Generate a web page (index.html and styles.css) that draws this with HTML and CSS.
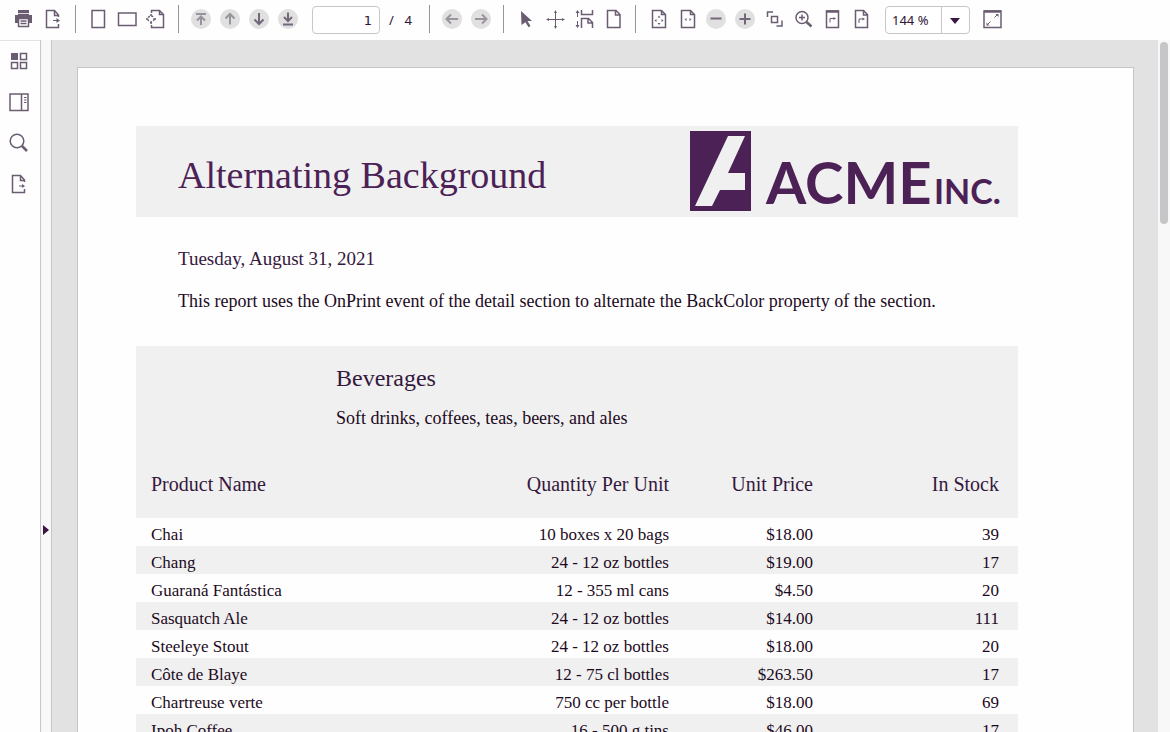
FILE: index.html
```html
<!DOCTYPE html>
<html lang="en">
<head>
<meta charset="utf-8">
<title>Alternating Background</title>
<link rel="stylesheet" href="styles.css">
</head>
<body>
<header class="toolbar" role="toolbar" aria-label="Report viewer">
  <button class="tool" aria-label="Print"><svg viewBox="0 0 20 20"><path class="solid" d="M4 1h11v3H4zM1 6h17v8h-3V9H4v5H1z"/><path d="M4 5.500h11M4.500 9.500h10v8h-10zM6.500 12h6M6.500 14.500h6"/></svg></button>
  <button class="tool" aria-label="Export"><svg viewBox="0 0 20 20"><path d="M15.500 8V6l-4-4.500h-8v17h12V15M11.500 2v4.500h4"/><path class="thin" d="M10 11.500h4"/><path class="solid" d="M13.500 9l3.500 2.500-3.500 2.500z"/></svg></button>
  <span class="sep"></span>
  <button class="tool" aria-label="Portrait"><svg viewBox="0 0 20 20"><path d="M4 1.500h12.500v17H4z"/></svg></button>
  <button class="tool" aria-label="Landscape"><svg viewBox="0 0 20 20"><path d="M1.500 4H19v12.500H1.500z"/></svg></button>
  <button class="tool" aria-label="Page setup"><svg viewBox="0 0 20 20"><path d="M5.500 4V1.500h8l4 4v13h-12V16M13.500 2v3.500h4"/><circle cx="5" cy="10" r="3" stroke-dasharray="2 1.500"/><path d="M5 5v2M5 13v2M0 10h2M8 10h2"/></svg></button>
  <span class="sep"></span>
  <button class="tool round off" aria-label="First page"><svg viewBox="0 0 20 20"><path d="M5 5h10M10 16V8M6 11.500l4-4 4 4"/></svg></button>
  <button class="tool round off" aria-label="Previous page"><svg viewBox="0 0 20 20"><path d="M10 15.500V5.500M5.500 9.500L10 5l4.500 4.500"/></svg></button>
  <button class="tool round" aria-label="Next page"><svg viewBox="0 0 20 20"><path d="M10 4v10.500M5.500 10.500L10 15l4.500-4.500"/></svg></button>
  <button class="tool round" aria-label="Last page"><svg viewBox="0 0 20 20"><path d="M10 3.500v8M6 8l4 4 4-4M5 15.500h10"/></svg></button>
  <input class="page-input" type="text" value="1" aria-label="Page number">
  <span class="page-total"><span>/</span><span>4</span></span>
  <span class="sep"></span>
  <button class="tool round off" aria-label="Back"><svg viewBox="0 0 20 20"><path d="M16 10H5M9 5.500L4.500 10 9 14.500"/></svg></button>
  <button class="tool round off" aria-label="Forward"><svg viewBox="0 0 20 20"><path d="M4 10h11M11 5.500l4.500 4.500-4.500 4.500"/></svg></button>
  <span class="sep"></span>
  <button class="tool" aria-label="Select"><svg viewBox="0 0 20 20"><path class="solid" d="M5 2l11 10h-4.500l3 5-2 1.200-3-5L5.500 16z"/></svg></button>
  <button class="tool" aria-label="Pan"><svg viewBox="0 0 20 20"><path class="thin" d="M10.500 2v17M2 10.500h17"/><path class="solid" d="M10.500 1l1.500 3h-3zM10.500 20l1.500-3h-3zM1 10.500l3-1.500v3zM20 10.500l-3-1.500v3z"/></svg></button>
  <button class="tool" aria-label="Continuous pages"><svg viewBox="0 0 20 20"><path d="M7.500 1v4.500h11V1M7.500 19V9.500h7l4 4V19M14 10v4h4.500"/><path class="thin" d="M3.500 3v5M3.500 12v5"/><path class="solid" d="M3.500 1l2 3h-4zM3.500 19l2-3h-4z"/></svg></button>
  <button class="tool" aria-label="Single page"><svg viewBox="0 0 20 20"><path d="M4.500 1.500h8.500l4 4v13H4.500zM12.500 2v4H17"/></svg></button>
  <span class="sep"></span>
  <button class="tool" aria-label="Fit page"><svg viewBox="0 0 20 20"><path d="M4.500 1.500h9l4 4v13h-13zM13.500 2v3.500h4"/><path class="solid" d="M9.500 8.500h3L11 6.500zM9.500 14h3L11 16zM8.500 10v3l-2-1.500zM13.500 10v3l2-1.500z"/></svg></button>
  <button class="tool" aria-label="Fit width"><svg viewBox="0 0 20 20"><path d="M4.500 1.500h9l4 4v13h-13zM13.500 2v3.500h4"/><path class="solid" d="M9.500 9v3l-2-1.500zM12.500 9v3l2-1.500z"/></svg></button>
  <button class="tool round" aria-label="Zoom out"><svg viewBox="0 0 20 20"><path d="M4.500 9.500h11"/></svg></button>
  <button class="tool round" aria-label="Zoom in"><svg viewBox="0 0 20 20"><path d="M4.500 10h11M10 4.500v11"/></svg></button>
  <button class="tool" aria-label="Zoom area"><svg viewBox="0 0 20 20"><path d="M3.500 8V3H9M7.500 7.500h6v6h-6zM18 11.500V17h-5.500"/></svg></button>
  <button class="tool" aria-label="Magnifier"><svg viewBox="0 0 20 20"><circle cx="9" cy="8.500" r="6"/><path d="M6 8.500h6M9 5.500v6"/><path class="bold" d="M13.500 13l5 4.500"/></svg></button>
  <button class="tool" aria-label="Rotate page"><svg viewBox="0 0 20 20"><path d="M4.500 2h12v16.500h-12z"/><path class="bold" d="M4 2.500h13"/><path class="thin" d="M8 13.500V9.500h4"/><path class="solid" d="M11.500 8v3l2.500-1.500z"/></svg></button>
  <button class="tool" aria-label="Rotate view"><svg viewBox="0 0 20 20"><path d="M4.500 1.500h8l4 4v13h-12zM12.500 2v4h4"/><path class="thin" d="M8 14v-4h4"/><path class="solid" d="M11.500 8.500v3l2.500-1.500z"/></svg></button>
  <span class="zoom">
    <select aria-label="Zoom level"><option>144 %</option></select>
    <svg class="caret" viewBox="0 0 10 6"><path d="M0 0h10L5 6z"/></svg>
  </span>
  <button class="tool" aria-label="Full screen"><svg viewBox="0 0 20 20"><path d="M1 2h17v16.500H1z"/><path class="bold" d="M1 2.500h17"/><path class="thin" d="M5 15l2.500-2.500M11.500 8.500L14 6"/><path class="solid" d="M3.500 16.500v-3l3 3zM15.500 5v3l-3-3z"/></svg></button>
</header>

<div class="workspace">
  <nav class="rail" aria-label="Panels">
    <button class="tool" aria-label="Thumbnails"><svg viewBox="0 0 20 20"><path class="solid" d="M2 2h7v7H2z"/><path d="M11.500 2.500h6v6h-6zM2.500 11.500h6v6h-6zM11.500 11.500h6v6h-6z"/></svg></button>
    <button class="tool" aria-label="Parameters"><svg viewBox="0 0 20 20"><path d="M1 2h18v16.500H1zM12.500 2v16"/><path class="thin" d="M15 5.500h2.500M15 8h2.500M15 10.500h2.500"/></svg></button>
    <button class="tool" aria-label="Search"><svg viewBox="0 0 20 20"><circle cx="8" cy="8" r="6.800"/><path class="bold" d="M13 13l5 5"/></svg></button>
    <button class="tool" aria-label="Export options"><svg viewBox="0 0 20 20"><path d="M15.500 8V6l-4-4.500h-8v17h12V15M11.500 2v4.500h4"/><path class="thin" d="M10 12h4"/><path class="solid" d="M13 10l3 2-3 2z"/></svg></button>
  </nav>
  <button class="splitter" aria-label="Expand panel"><svg viewBox="0 0 6 10"><path d="M0 0l6 5-6 5z"/></svg></button>

  <main class="canvas">
    <article class="sheet">
      <header class="banner">
        <h1>Alternating Background</h1>
        <svg class="logo" viewBox="0 0 314 80" role="img" aria-label="Acme Inc.">
          <path class="ink" d="M1 0h61v80H1z"/>
          <path class="cut" d="M39 5h17L39 42h17v17H31l-8 16H6z"/>
          <text class="ink acme" x="77" y="73">ACME</text>
          <text class="ink inc" x="245" y="73">INC.</text>
        </svg>
      </header>
      <p class="date">Tuesday, August 31, 2021</p>
      <p class="intro">This report uses the OnPrint event of the detail section to alternate the BackColor property of the section.</p>

      <section class="group">
        <div class="group-head">
          <h2>Beverages</h2>
          <p>Soft drinks, coffees, teas, beers, and ales</p>
        </div>
        <table>
          <thead><tr><th class="name">Product Name</th><th>Quantity Per Unit</th><th class="price">Unit Price</th><th class="stock">In Stock</th></tr></thead>
          <tbody>
            <tr><td>Chai</td><td>10 boxes x 20 bags</td><td>$18.00</td><td>39</td></tr>
            <tr><td>Chang</td><td>24 - 12 oz bottles</td><td>$19.00</td><td>17</td></tr>
            <tr><td>Guaraná Fantástica</td><td>12 - 355 ml cans</td><td>$4.50</td><td>20</td></tr>
            <tr><td>Sasquatch Ale</td><td>24 - 12 oz bottles</td><td>$14.00</td><td>111</td></tr>
            <tr><td>Steeleye Stout</td><td>24 - 12 oz bottles</td><td>$18.00</td><td>20</td></tr>
            <tr><td>Côte de Blaye</td><td>12 - 75 cl bottles</td><td>$263.50</td><td>17</td></tr>
            <tr><td>Chartreuse verte</td><td>750 cc per bottle</td><td>$18.00</td><td>69</td></tr>
            <tr><td>Ipoh Coffee</td><td>16 - 500 g tins</td><td>$46.00</td><td>17</td></tr>
          </tbody>
        </table>
      </section>
    </article>
  </main>
  <div class="scrollbar"><div class="thumb"></div></div>
</div>
</body>
</html>
```
FILE: styles.css
```css
* { box-sizing: border-box; }

body {
  margin: 0;
  height: 100vh;
  display: flex;
  flex-direction: column;
  overflow: hidden;
  background: #fefefe;
  color: #1c0a22;
  font-family: "Liberation Serif", "Times New Roman", serif;
}

h1, h2, p { margin: 0; font-weight: 400; }

button { padding: 0; border: 0; background: none; color: inherit; }

/* Toolbar */
.toolbar {
  display: flex;
  flex: none;
  align-items: center;
  gap: 9px;
  height: 40px;
  padding: 0 14px 2px;
  font-family: "Noto Sans", sans-serif;
  font-size: 13px;
}

.tool { flex: none; width: 20px; height: 20px; color: #6b5d71; }
.tool svg {
  display: block;
  width: 20px;
  height: 20px;
  fill: none;
  stroke: currentColor;
  stroke-width: 1.5;
}
.tool .solid { fill: currentColor; stroke: none; }
.tool .thin { stroke-width: 1; }
.tool .bold { stroke-width: 2.5; }

.round { border-radius: 50%; background: #e1e0e1; color: #73677a; }
.round svg { stroke-width: 2; }
.off { color: #99949c; }

.sep { flex: none; width: 1px; height: 28px; margin: 0 3px; background: #99949c; }

.page-input {
  width: 68px;
  height: 28px;
  margin: 2px 0 0 5px;
  padding: 0 7px;
  border: 1px solid #c9c6ca;
  border-radius: 4px;
  background: #fff;
  color: #2e1436;
  font: 13px "DejaVu Sans", sans-serif;
  text-align: right;
}

.page-total {
  display: flex;
  justify-content: space-between;
  width: 28px;
  padding: 2px 5px 0 0;
  color: #2e1436;
}

.zoom { position: relative; display: flex; margin: 2px 4px 0 5px; }
.zoom select {
  appearance: none;
  width: 85px;
  height: 28px;
  padding: 0 6px;
  border: 1px solid #c9c6ca;
  border-radius: 4px;
  background: linear-gradient(#c9c6ca, #c9c6ca) 55px 0 / 1px 100% no-repeat #fff;
  color: #2e1436;
  font: 13px "Noto Sans", sans-serif;
}
.caret {
  position: absolute;
  top: 12px;
  right: 10px;
  width: 10px;
  height: 6px;
  fill: #3a1743;
  pointer-events: none;
}

/* Side rail and splitter */
.workspace { display: flex; flex: 1; min-height: 0; }

.rail {
  display: flex;
  flex: none;
  flex-direction: column;
  align-items: center;
  gap: 21px;
  width: 40px;
  padding: 10px 2px 0 0;
  border-top: 1px solid #e2e2e2;
}

.splitter {
  display: flex;
  flex: none;
  align-items: center;
  width: 12px;
  padding: 288px 0 0 2px;
  border: solid #c8c6c8;
  border-width: 0 1px;
  background: #f8f8f8;
}
.splitter svg { width: 6px; height: 10px; fill: #3a1743; }

/* Report page */
.canvas {
  flex: 1;
  overflow: hidden;
  padding: 27px 24px 0 25px;
  background: #e2e2e2;
}

.sheet {
  min-height: 100%;
  padding: 58px 115px 0 58px;
  border: 1px solid #c6c5c6;
  background: #fefefe;
}

.banner {
  display: flex;
  align-items: center;
  justify-content: space-between;
  padding: 5px 15px 6px 42px;
  background: #f0f0f0;
}
.banner h1 { color: #4c2156; font-size: 38px; line-height: 46px; padding-top: 8px; }

.logo { width: 314px; height: 80px; }
.ink { fill: #4c2156; }
.cut { fill: #f0f0f0; }
.acme { font: 700 58px Lato, sans-serif; }
.inc { font: 700 34px Lato, sans-serif; }

.date { padding: 30px 42px 0; color: #35183d; font-size: 19px; line-height: 24px; }
.intro { padding: 20px 42px 35px; font-size: 18px; line-height: 20px; }

.group-head {
  padding: 17px 0 0 200px;
  background: #f0f0f0;
}
.group-head h2 { color: #35183d; font-size: 24px; line-height: 30px; }
.group-head p { padding: 15px 0 23px; font-size: 18px; line-height: 20px; }

table { width: 100%; table-layout: fixed; border-collapse: collapse; font-size: 17px; }
th, td { padding: 0; text-align: right; font-weight: 400; white-space: nowrap; }
th { height: 67px; color: #35183d; background: #f0f0f0; font-size: 20px; }
td { height: 28px; padding-top: 6px; line-height: 22px; }
th:first-child, td:first-child { padding-left: 15px; text-align: left; }
th:last-child, td:last-child { padding-right: 19px; }
tbody tr:nth-child(even) { background: #f0f0f0; }

.name { width: 34%; }
.price { width: 144px; }
.stock { width: 205px; }

/* Scrollbar */
.scrollbar {
  flex: none;
  width: 12px;
  padding: 2px 2px 0;
  background: #f8f8f8;
}
.thumb { height: 182px; border-radius: 4px; background: #c6c5c8; }
```
